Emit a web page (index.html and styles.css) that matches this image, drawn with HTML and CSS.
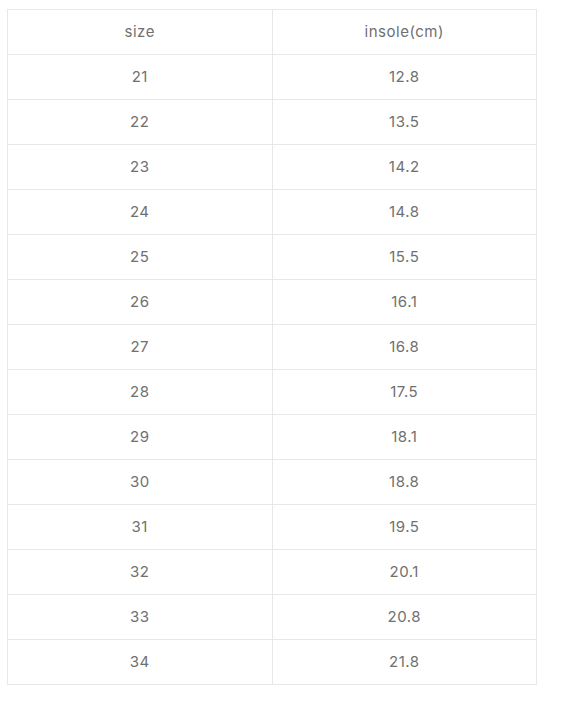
FILE: index.html
```html
<!DOCTYPE html>
<html>
<head>
<meta charset="utf-8">
<link rel="stylesheet" href="styles.css">
</head>
<body>
<table class="size-table">
<thead>
<tr><th>size</th><th>insole(cm)</th></tr>
</thead>
<tbody>
<tr><td>21</td><td>12.8</td></tr>
<tr><td>22</td><td>13.5</td></tr>
<tr><td>23</td><td>14.2</td></tr>
<tr><td>24</td><td>14.8</td></tr>
<tr><td>25</td><td>15.5</td></tr>
<tr><td>26</td><td>16.1</td></tr>
<tr><td>27</td><td>16.8</td></tr>
<tr><td>28</td><td>17.5</td></tr>
<tr><td>29</td><td>18.1</td></tr>
<tr><td>30</td><td>18.8</td></tr>
<tr><td>31</td><td>19.5</td></tr>
<tr><td>32</td><td>20.1</td></tr>
<tr><td>33</td><td>20.8</td></tr>
<tr><td>34</td><td>21.8</td></tr>
</tbody>
</table>
</body>
</html>
```
FILE: styles.css
```css
html, body {
  margin: 0;
  padding: 0;
  background: #ffffff;
}
body {
  padding: 9px 0 0 7px;
  font-family: "Inter", "Liberation Sans", sans-serif;
}
.size-table {
  border-collapse: collapse;
  width: 530px;
  table-layout: fixed;
}
.size-table th,
.size-table td {
  border: 1px solid #e8e8e8;
  height: 42px;
  padding: 0 0 2px 0;
  text-align: center;
  vertical-align: middle;
  font-size: 15px;
  letter-spacing: 0.5px;
  font-weight: 400;
  color: #707070;
}
```
